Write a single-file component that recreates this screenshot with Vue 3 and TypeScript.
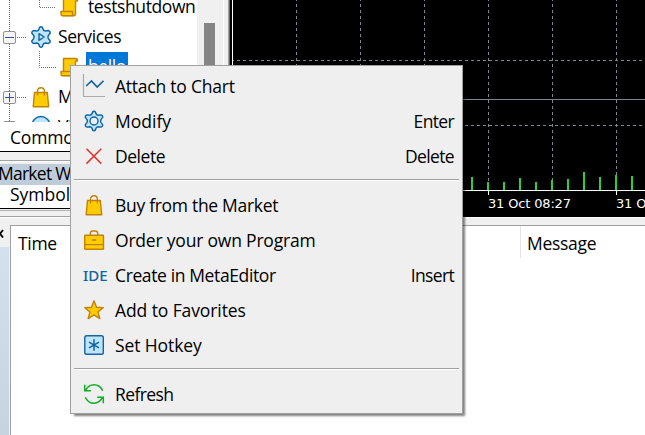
<script setup lang="ts">
import { defineComponent, h } from 'vue'

interface MenuItem {
  label: string
  icon: string
  shortcut?: string
  spacing: number
}

const groups: MenuItem[][] = [
  [
    { label: 'Attach to Chart', icon: 'chart', spacing: -0.23 },
    { label: 'Modify', icon: 'gear', shortcut: 'Enter', spacing: 0 },
    { label: 'Delete', icon: 'cross', shortcut: 'Delete', spacing: -0.45 },
  ],
  [
    { label: 'Buy from the Market', icon: 'bag', spacing: -0.3 },
    { label: 'Order your own Program', icon: 'case', spacing: -0.2 },
    { label: 'Create in MetaEditor', icon: 'ide', shortcut: 'Insert', spacing: -0.38 },
    { label: 'Add to Favorites', icon: 'star', spacing: -0.1 },
    { label: 'Set Hotkey', icon: 'hotkey', spacing: -0.1 },
  ],
  [{ label: 'Refresh', icon: 'refresh', spacing: -0.6 }],
]

const gearPath =
  'M12 2.2Q13.6 2.2 13.9 4.6Q14.4 6 16 6.2L19.2 5.9Q20.9 6.8 20.8 8.2L18.9 10.7Q18.4 12 18.9 13.3L20.8 15.8Q20.9 17.2 19.2 18.1L16 17.8Q14.4 18 13.9 19.4Q13.6 21.8 12 21.8Q10.4 21.8 10.1 19.4Q9.6 18 8 17.8L4.8 18.1Q3.1 17.2 3.2 15.8L5.1 13.3Q5.6 12 5.1 10.7L3.2 8.2Q3.1 6.8 4.8 5.9L8 6.2Q9.6 6 10.1 4.6Q10.4 2.2 12 2.2Z'

const blue = { fill: '#bfe4ff', stroke: '#0e64a3', 'stroke-width': 1.4, 'stroke-linejoin': 'round' }
const gold = { fill: '#ffcc00', stroke: '#c2820a', 'stroke-width': 1.4, 'stroke-linejoin': 'round' }

const Glyph = defineComponent({
  props: { name: { type: String, required: true } },
  setup(props) {
    const line = (d: string, stroke: string, w = 1.5) =>
      h('path', { d, stroke, fill: 'none', 'stroke-width': w })
    const shapes: Record<string, () => unknown[]> = {
      chart: () => [
        line('M1.5 0V22.5H23', '#ababab', 1.2),
        line('M4.2 12L9.5 7L15.2 13L21.5 6.8', '#0e64a3', 1.6),
      ],
      gear: () => [h('path', { d: gearPath, ...blue }), h('circle', { cx: 12, cy: 12, r: 4, ...blue, fill: '#efefef' })],
      service: () => [
        h('path', { d: gearPath, ...blue, transform: 'translate(-.6 -.6) scale(1.05)' }),
        h('path', { d: 'M10 8.7L15.2 12L10 15.3Z', ...blue }),
      ],
      cross: () => [line('M4.5 4.8L19.3 19.6M19.3 4.8L4.5 19.6', '#e0352f', 1.5)],
      bag: () => [
        h('path', { d: 'M5.5 7.5H18.3L19.7 21.7H4.2Z', ...gold }),
        line('M8.5 10.5V6.2Q8.8 2.8 12 2.8Q15.2 2.8 15.4 6.2V10.5', '#c2820a', 1.4),
      ],
      case: () => [
        line('M8.3 7V5.2Q8.5 3 10.5 3H13.5Q15.5 3 15.7 5.2V7', '#c2820a', 1.4),
        h('rect', { x: 2.7, y: 7.3, width: 18.8, height: 14, rx: 0.6, ...gold }),
        line('M2.7 16.7H21.5M9.8 12H14.3', '#c2820a', 1.3),
      ],
      star: () => [
        h('path', { d: 'M12 2.8L14.5 9.3L21.2 9.6L16 14L17.8 20.6L12 16.9L6.2 20.6L8 14L2.8 9.6L9.5 9.3Z', ...gold }),
      ],
      hotkey: () => [
        h('rect', { x: 2.8, y: 2.8, width: 18.5, height: 18.5, rx: 1.8, ...blue }),
        line('M12 6.3V17.7M7 9.1L17 14.9M17 9.1L7 14.9', '#0e64a3', 1.5),
      ],
      refresh: () => [
        line('M3.4 8.6Q6.5 2.8 12 2.8Q18 2.8 20.7 8.8M2.7 2.8V8.8H8.8', '#0fae24'),
        line('M20.6 15.2Q17.5 21.3 12 21.3Q6 21.3 3.3 15.2M21.3 21.3V15.2H15.2', '#0fae24'),
      ],
      script: () => [
        h('path', { d: 'M5.5 3.5H18Q19.5 3.5 19.5 6H17.5V19Q17.5 20.5 16 20.5H5.5Z', ...gold }),
        h('path', { d: 'M3 16.5H14.5V19Q14.5 20.7 16 20.7H4.5Q3 20.7 3 18.5Z', ...gold }),
      ],
      globe: () => [h('circle', { cx: 12, cy: 10.5, r: 9, ...blue })],
    }
    return () => h('svg', { viewBox: '0 0 24 24', width: 24, height: 24 }, shapes[props.name]() as never)
  },
})

const gridX = [64, 128, 192, 256, 320, 384]
const gridY = [60, 125]
const volumes = [
  [240, 177], [256, 182], [272, 182], [288, 178], [304, 182], [320, 180],
  [336, 179], [352, 172], [368, 177], [384, 175], [400, 176],
]
</script>

<template>
  <main class="window">
    <div class="upper">
      <aside class="side">
        <section class="navigator">
          <div class="tree">
            <svg class="links" viewBox="0 0 197 122" width="197" height="122">
              <path d="M9.5 0V122M39.5 0V7.5H56M39.5 51V67.5H56M17 37.5H27M17 97.5H27" />
            </svg>
            <div class="node leaf"><Glyph name="script" /><span class="name">testshutdown</span></div>
            <div class="node"><i class="box"></i><Glyph name="service" /><span class="name">Services</span></div>
            <div class="node leaf"><Glyph name="script" /><span class="name chosen">hello</span></div>
            <div class="node"><i class="box plus"></i><Glyph name="bag" /><span class="name">Market</span></div>
            <div class="node"><i class="box plus"></i><Glyph name="globe" /><span class="name">VPS</span></div>
          </div>
          <div class="scroll"><div class="thumb"></div></div>
        </section>
        <div class="tabs">Common</div>
        <div class="gap"></div>
        <div class="caption">Market Watch</div>
        <div class="columns">Symbol</div>
        <div class="foot"></div>
      </aside>
      <div class="frame"></div>
      <svg class="chart" viewBox="0 0 413 217" width="413" height="217">
        <rect width="413" height="217" fill="#000" />
        <g class="grid">
          <line v-for="x in gridX" :key="x" :x1="x + 0.5" :x2="x + 0.5" y1="-2" y2="190" />
          <line v-for="y in gridY" :key="y" x1="-1" x2="413" :y1="y + 0.5" :y2="y + 0.5" />
        </g>
        <path d="M0 99.5H413" stroke="#778899" />
        <rect v-for="v in volumes" :key="v[0]" :x="v[0] - 1" :y="v[1]" width="2" :height="190 - v[1]" fill="#32cd32" />
        <path d="M0.5 0V190.5H413M256.5 190V195M384.5 190V195" stroke="#fff" fill="none" />
        <text x="256" y="208" textLength="83">31 Oct 08:27</text>
        <text x="384" y="208" textLength="83">31 Oct 08:31</text>
      </svg>
    </div>
    <div class="splitter"></div>
    <div class="toolbox">
      <div class="strip">
        <span class="close"><svg viewBox="0 0 8 10" width="8" height="10"><path d="M-3 1L3 8.5M3 1L-3 8.5" /></svg></span>
        <div class="title"></div>
      </div>
      <div class="journal">
        <div class="cell">Time</div>
        <div class="cell message">Message</div>
      </div>
    </div>

    <nav class="menu">
      <template v-for="(group, g) in groups" :key="g">
        <hr v-if="g > 0" />
        <div v-for="item in group" :key="item.label" class="item">
          <span v-if="item.icon === 'ide'" class="ide">IDE</span>
          <Glyph v-else :name="item.icon" />
          <span class="label" :style="{ letterSpacing: item.spacing + 'px' }">{{ item.label }}</span>
          <span class="key">{{ item.shortcut }}</span>
        </div>
      </template>
    </nav>
  </main>
</template>

<style>
body { margin: 0; overflow: hidden; }
</style>

<style scoped>
* { box-sizing: border-box; }
.window {
  position: relative;
  width: 645px;
  height: 435px;
  overflow: hidden;
  background: #f0f0f0;
  color: #000;
  font: 17.5px/24px "Open Sans", "Noto Sans", sans-serif;
  letter-spacing: -0.4px;
  white-space: nowrap;
}
svg { display: block; flex: none; }
.upper { display: flex; height: 217px; }
.side { width: 228px; flex: none; overflow: hidden; }
.frame { width: 4px; flex: none; background: #000; border-left: 1px solid #a0a0a0; box-shadow: inset 1px 0 #696969; }
.navigator { display: flex; height: 122px; }
.tree { position: relative; width: 197px; height: 122px; flex: none; background: #fff; overflow: hidden; }
.links { position: absolute; left: 0; top: 0; }
.links path { fill: none; stroke: #707070; stroke-dasharray: 1 1; }
.node { position: relative; display: flex; align-items: center; height: 30px; padding-left: 3px; }
.node:first-of-type { margin-top: -8px; }
.leaf { padding-left: 58px; }
.box { width: 13px; height: 13px; margin-right: 13px; border: 1px solid #919191; border-radius: 2px; background: linear-gradient(90deg, #3c50a0, #3c50a0) center / 9px 1px no-repeat, #f5f5f5; }
.plus { background: linear-gradient(#3c50a0, #3c50a0) center / 9px 1px no-repeat, linear-gradient(#3c50a0, #3c50a0) center / 1px 9px no-repeat, #f5f5f5; }
.name { margin-left: 5px; line-height: 22px; padding-bottom: 2px; }
.leaf .name { margin-left: 4px; padding: 0 2px; height: 30px; line-height: 29px; }
.chosen { background: #0078d7; color: #fff; }
.scroll { width: 27px; padding: 23px 0 0 7px; background: #f0f0f0; border-right: 1px solid #fff; }
.thumb { width: 11px; height: 99px; background: #858585; }
.tabs { height: 30px; padding: 3px 0 0 10px; background: #fff; border-bottom: 1px solid #000; letter-spacing: -0.2px; }
.gap { height: 12px; background: linear-gradient(#f0f0f0 8px, #a0a0a0 8px 9px, #fff 9px 10px, #f0f0f0 10px); }
.caption { height: 21px; line-height: 19px; background: #bfcddb; text-indent: -2px; letter-spacing: -0.75px; }
.columns { height: 24px; padding-left: 10px; line-height: 19px; background: #fff; border-bottom: 1px solid #000; letter-spacing: 0; }
.foot { height: 8px; background: linear-gradient(#f0f0f0 1px, #b4b4b4 1px 2px, #f0f0f0 2px 7px, #a0a0a0 7px); }
.grid line { stroke: #778899; stroke-dasharray: 3 3; }
.chart text { fill: #fff; font: 13px "DejaVu Sans", sans-serif; letter-spacing: 0; }
.splitter { height: 8px; border-top: 1px solid #fff; }
.toolbox { display: flex; height: 210px; }
.strip { width: 10px; }
.close { display: block; height: 22px; padding-top: 4px; }
.close path { stroke: #000; stroke-width: 2; fill: none; }
.title { width: 9px; height: 188px; background: linear-gradient(#d3e1ef, #c6d4e2); }
.journal { display: flex; flex: 1; border: 1px solid #a0a0a0; border-width: 1px 0 0 1px; background: #fff; }
.cell { width: 510px; flex: none; height: 32px; padding: 5px 0 0 7px; border-right: 1px solid #e5e5e5; letter-spacing: -0.3px; }
.message { width: 124px; padding-left: 6px; border: 0; }
.menu {
  position: absolute;
  left: 70px;
  top: 65px;
  width: 393px;
  height: 349px;
  padding: 3px;
  border: 1px solid #a0a0a0;
  background: #efefef;
  box-shadow: 3px 3px 2px -1px rgba(0, 0, 0, 0.5);
}
.item { display: flex; align-items: center; height: 35px; padding: 0 5px 0 8px; }
.item svg { margin-top: -1px; }
.label { margin-left: 9px; padding-bottom: 2px; }
.key { margin-left: auto; padding-bottom: 2px; letter-spacing: -0.65px; }
.ide { width: 24px; padding-bottom: 2px; color: #0e64a3; font: 500 15px/24px "Noto Sans", sans-serif; letter-spacing: 0; text-indent: 1px; }
hr { height: 2px; margin: 5px 0 7px; border: 0; border-top: 1px solid #a0a0a0; background: #fff; }
</style>
